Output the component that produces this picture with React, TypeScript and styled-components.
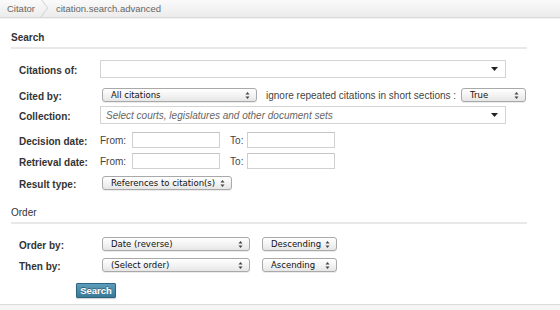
import styled, { createGlobalStyle } from "styled-components";

const GlobalStyle = createGlobalStyle`
  html, body {
    margin: 0;
    padding: 0;
    background: #fff;
  }
  body {
    font-family: "Liberation Sans", Arial, sans-serif;
    font-size: 10px;
    color: #333;
  }
`;

const UpDown = () => (
  <svg width="5" height="9" viewBox="0 0 5 9" aria-hidden>
    <path d="M0.5 3.5 L2.5 1 L4.5 3.5Z" fill="#444" />
    <path d="M0.5 5.5 L2.5 8 L4.5 5.5Z" fill="#444" />
  </svg>
);

const Caret = () => (
  <svg width="7" height="4" viewBox="0 0 7 4" aria-hidden>
    <path d="M0 0 L7 0 L3.5 4Z" fill="#222" />
  </svg>
);

const Select = ({ value, width, ml = 0 }: { value: string; width: number; ml?: number }) => (
  <MacSelect $w={width} $ml={ml}>
    <span>{value}</span>
    <UpDown />
  </MacSelect>
);

const App = () => {
  return (
    <Page>
      <GlobalStyle />
      <Crumbs>
        <Crumb>Citator</Crumb>
        <Chevron />
        <Crumb>citation.search.advanced</Crumb>
      </Crumbs>

      <Section $top={14}>
        <Legend $bold>Search</Legend>
        <Fields>
          <Row $mt={10}>
            <Label>Citations of:</Label>
            <Chosen $w={406}>
              <span />
              <Caret />
            </Chosen>
          </Row>
          <Row $mt={6}>
            <Label>Cited by:</Label>
            <Select value="All citations" width={155} ml={2} />
            <Text $ml={9}>ignore repeated citations in short sections :</Text>
            <Select value="True" width={65} ml={5} />
          </Row>
          <Row $mt={0}>
            <Label>Collection:</Label>
            <Chosen $w={406}>
              <Placeholder>Select courts, legislatures and other document sets</Placeholder>
              <Caret />
            </Chosen>
          </Row>
          <Row $mt={5}>
            <Label>Decision date:</Label>
            <Text>From:</Text>
            <Input $ml={6} />
            <Text $ml={10}>To:</Text>
            <Input $ml={4} />
          </Row>
          <Row $mt={1}>
            <Label>Retrieval date:</Label>
            <Text>From:</Text>
            <Input $ml={6} />
            <Text $ml={10}>To:</Text>
            <Input $ml={4} />
          </Row>
          <Row $mt={2}>
            <Label>Result type:</Label>
            <Select value="References to citation(s)" width={130} ml={2} />
          </Row>
        </Fields>
      </Section>

      <Section $top={14}>
        <Legend>Order</Legend>
        <Fields>
          <Row $mt={10}>
            <Label>Order by:</Label>
            <Select value="Date (reverse)" width={148} ml={2} />
            <Select value="Descending" width={75} ml={12} />
          </Row>
          <Row $mt={1}>
            <Label>Then by:</Label>
            <Select value="(Select order)" width={148} ml={2} />
            <Select value="Ascending" width={75} ml={12} />
          </Row>
        </Fields>
        <Actions>
          <Button>Search</Button>
        </Actions>
      </Section>
      <Footer />
    </Page>
  );
};

export default App;

const Page = styled.div`
  width: 560px;
  height: 310px;
  overflow: hidden;
  display: flex;
  flex-direction: column;
`;

const Crumbs = styled.div`
  height: 17px;
  display: flex;
  align-items: center;
  padding: 0 7px;
  background: linear-gradient(#fafafa, #ececec);
  border-bottom: 1px solid #d9d9d9;
  box-shadow: 0 1px 0 #f3f3f3;
`;

const Crumb = styled.span`
  font-size: 9.5px;
  color: #666;
`;

const Chevron = styled.span`
  width: 8px;
  height: 17px;
  margin: 0 8px 0 5px;
  position: relative;
  &::before {
    content: "";
    position: absolute;
    left: -5px;
    top: 2px;
    width: 11px;
    height: 11px;
    border-top: 1px solid #d6d6d6;
    border-right: 1px solid #d6d6d6;
    transform: rotate(45deg) skew(8deg, 8deg);
  }
`;

const Section = styled.div<{ $top: number }>`
  margin-top: ${(p) => p.$top}px;
  padding: 0 33px 0 11px;
`;

const Legend = styled.div<{ $bold?: boolean }>`
  font-size: 10px;
  font-weight: ${(p) => (p.$bold ? "bold" : "normal")};
  color: #333;
  line-height: 12px;
  padding-bottom: 3px;
  border-bottom: 2px solid #e8e8e8;
`;

const Fields = styled.div`
  display: flex;
  flex-direction: column;
  padding-left: 8px;
`;

const Row = styled.div<{ $mt: number }>`
  display: flex;
  align-items: center;
  height: 20px;
  margin-top: ${(p) => p.$mt}px;
`;

const Label = styled.label`
  width: 81px;
  flex-shrink: 0;
  font-weight: bold;
  color: #333;
  padding-top: 2px;
`;

const Text = styled.span<{ $ml?: number }>`
  margin-left: ${(p) => p.$ml ?? 0}px;
  color: #444;
  padding-top: 1px;
  white-space: nowrap;
  flex-shrink: 0;
`;

const MacSelect = styled.div<{ $w: number; $ml: number }>`
  box-sizing: border-box;
  width: ${(p) => p.$w}px;
  flex-shrink: 0;
  height: 14px;
  margin-left: ${(p) => p.$ml}px;
  display: flex;
  align-items: center;
  justify-content: space-between;
  padding: 0 6px 0 8px;
  border: 1px solid #a9a9a9;
  border-radius: 3px;
  background: linear-gradient(#ffffff, #f1f1f1 60%, #e6e6e6);
  box-shadow: 0 1px 0 rgba(0, 0, 0, 0.08);
  font-family: "DejaVu Sans", "Liberation Sans", sans-serif;
  font-size: 8.5px;
  color: #111;
  white-space: nowrap;
`;

const Chosen = styled.div<{ $w: number }>`
  box-sizing: border-box;
  width: ${(p) => p.$w}px;
  height: 18px;
  display: flex;
  align-items: center;
  justify-content: space-between;
  padding: 0 7px 0 5px;
  border: 1px solid #d4d4d4;
  background: #fff;
`;

const Placeholder = styled.span`
  font-style: italic;
  color: #666;
`;

const Input = styled.div<{ $ml: number }>`
  box-sizing: border-box;
  width: 88px;
  height: 16px;
  margin-left: ${(p) => p.$ml}px;
  border: 1px solid #d0d0d0;
  border-top-color: #c4c4c4;
  background: #fff;
`;

const Actions = styled.div`
  display: flex;
  padding: 8px 0 0 65px;
`;

const Button = styled.button`
  height: 15px;
  width: 40px;
  padding: 0;
  border: 1px solid #2d6480;
  border-radius: 1px;
  background: linear-gradient(#5b9dbb, #3a7898);
  color: #fff;
  font-family: "Liberation Sans", Arial, sans-serif;
  font-size: 9.5px;
  font-weight: bold;
  text-shadow: 0 -1px 0 rgba(0, 0, 0, 0.35);
  box-shadow: 0 1px 1px rgba(0, 0, 0, 0.2);
`;

const Footer = styled.div`
  margin-top: 6px;
  flex: 1;
  border-top: 1px solid #dcdcdc;
  background: #f5f5f5;
`;
